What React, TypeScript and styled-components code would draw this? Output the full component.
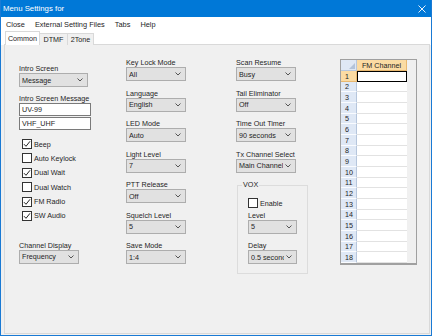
import React from 'react';
import styled, { createGlobalStyle } from 'styled-components';

const Global = createGlobalStyle`
  html, body { margin: 0; padding: 0; background: #f0f0f0; }
  body { font-family: "Liberation Sans", Arial, sans-serif; font-size: 7.2px; color: #1e1e1e; }
  * { box-sizing: border-box; }
`;

const Window = styled.div`
  width: 432px;
  height: 336px;
  display: flex;
  flex-direction: column;
  border: 1px solid #1a7ad4;
  border-top: none;
  background: #f0f0f0;
  overflow: hidden;
`;

const TitleBar = styled.div`
  height: 17px;
  flex: none;
  margin: 0 -1px;
  padding: 0 6px 0 3px;
  background: #0078d7;
  color: #fff;
  font-size: 7.8px;
  display: flex;
  align-items: center;
  justify-content: space-between;
`;

const MenuBar = styled.div`
  height: 14px;
  flex: none;
  background: #fff;
  display: flex;
  align-items: center;
  gap: 10px;
  padding-left: 5px;
  font-size: 7.4px;
`;

const MenuItem = styled.span`
  white-space: nowrap;
`;

const TabStrip = styled.div`
  height: 14px;
  flex: none;
  display: flex;
  align-items: flex-end;
  padding-left: 4px;
  background: #fff;
`;

const Tab = styled.div<{ $active?: boolean; $w: number }>`
  width: ${p => p.$w}px;
  height: ${p => (p.$active ? 14 : 12)}px;
  margin-left: -1px;
  background: ${p => (p.$active ? '#fff' : '#f0f0f0')};
  border: 1px solid #d9d9d9;
  border-bottom: none;
  display: flex;
  align-items: center;
  justify-content: center;
  white-space: nowrap;
  position: relative;
  z-index: ${p => (p.$active ? 1 : 0)};
  &:first-child { margin-left: 0; }
`;

const Panel = styled.div`
  flex: 1;
  margin: -1px 1px 1px 3px;
  border: 1px solid #d9d9d9;
  background: #f0f0f0;
  display: grid;
  grid-template-columns: 107px 110px 104px 77px;
  align-items: start;
  padding-left: 14px;
`;

const Column = styled.div<{ $pt: number; $gap?: number }>`
  display: flex;
  flex-direction: column;
  padding-top: ${p => p.$pt}px;
  gap: ${p => p.$gap ?? 0}px;
`;

const Field = styled.div<{ $mt?: number }>`
  display: flex;
  flex-direction: column;
  margin-top: ${p => p.$mt ?? 0}px;
`;

const Label = styled.div`
  height: 8px;
  line-height: 8px;
  white-space: nowrap;
`;

const SelectBox = styled.div<{ $w: number }>`
  width: ${p => p.$w}px;
  height: 14px;
  background: #e1e1e1;
  border: 1px solid #adadad;
  display: flex;
  align-items: center;
  padding: 0 4px 0 2px;
  gap: 2px;
`;

const SelectText = styled.span`
  flex: 1;
  overflow: hidden;
  white-space: nowrap;
`;

const TextBox = styled.div`
  width: 72px;
  height: 13px;
  background: #fff;
  border: 1px solid #7a7a7a;
  display: flex;
  align-items: center;
  padding-left: 2px;
`;

const TextStack = styled.div`
  display: flex;
  flex-direction: column;
  gap: 1px;
`;

const CheckList = styled.div<{ $mt: number }>`
  display: flex;
  flex-direction: column;
  gap: 4.4px;
  margin-top: ${p => p.$mt}px;
  padding-left: 3px;
`;

const CheckRow = styled.div`
  height: 10px;
  display: flex;
  align-items: center;
  gap: 2px;
  white-space: nowrap;
`;

const Box = styled.span`
  width: 10px;
  height: 10px;
  flex: none;
  background: #fff;
  border: 1px solid #333;
  display: flex;
  align-items: center;
  justify-content: center;
`;

const Group = styled.fieldset`
  margin: 0 0 0 1px;
  width: 71px;
  height: 93px;
  border: 1px solid #dcdcdc;
  padding: 0;
  min-width: 0;
`;

const Legend = styled.legend`
  margin-left: 4px;
  padding: 0 1px;
  line-height: 8px;
  height: 8px;
`;

const GroupBody = styled.div`
  display: flex;
  flex-direction: column;
  padding: 9px 0 0 10px;
`;

const Grid = styled.div`
  width: 77px;
  height: 206px;
  border: 1px solid #a0a0a0;
  border-bottom-width: 2px;
  background: #f0f0f0;
  display: flex;
  flex-direction: column;
`;

const GridRow = styled.div<{ $h: number }>`
  display: flex;
  height: ${p => p.$h}px;
  flex: none;
`;

const Corner = styled.div`
  width: 16px;
  height: 100%;
  background: #dfe8f5;
  border-right: 1px solid #b6c6dc;
  border-bottom: 1px solid #b6c6dc;
  display: flex;
  align-items: flex-end;
  justify-content: flex-end;
  padding: 0 1px 1px 0;
`;

const ColHead = styled.div`
  width: 50px;
  height: 100%;
  background: #fbdba3;
  border-right: 1px solid #e8b870;
  border-bottom: 1px solid #e8b870;
  display: flex;
  align-items: center;
  justify-content: center;
  white-space: nowrap;
`;

const RowHead = styled.div<{ $sel?: boolean }>`
  width: 16px;
  height: 100%;
  background: ${p => (p.$sel ? '#fbdba3' : '#dfe8f5')};
  border-right: 1px solid ${p => (p.$sel ? '#e8b870' : '#b6c6dc')};
  border-bottom: 1px solid ${p => (p.$sel ? '#e8b870' : '#fafcff')};
  display: flex;
  align-items: center;
  padding-left: 4px;
`;

const Cell = styled.div<{ $sel?: boolean }>`
  width: 50px;
  height: 100%;
  background: #fff;
  border-bottom: 1px solid #e2e2e2;
  ${p => (p.$sel ? 'outline: 1px solid #000; outline-offset: -1px; border-bottom-color: #000;' : '')}
`;

const Chevron = () => (
  <svg width="6" height="4" viewBox="0 0 6 4">
    <polyline points="0.5,0.5 3,3 5.5,0.5" fill="none" stroke="#444" strokeWidth="0.9" />
  </svg>
);

const Check = () => (
  <svg width="8" height="8" viewBox="0 0 8 8">
    <polyline points="1,4.2 3,6.3 7,1.3" fill="none" stroke="#222" strokeWidth="1" />
  </svg>
);

const CloseX = () => (
  <svg width="8" height="8" viewBox="0 0 8 8">
    <path d="M0.5 0.5 L7.5 7.5 M7.5 0.5 L0.5 7.5" stroke="#fff" strokeWidth="0.9" />
  </svg>
);

const Select = ({ value, w }: { value: string; w: number }) => (
  <SelectBox $w={w}>
    <SelectText>{value}</SelectText>
    <Chevron />
  </SelectBox>
);

const Checkbox = ({ label, checked }: { label: string; checked?: boolean }) => (
  <CheckRow>
    <Box>{checked && <Check />}</Box>
    <span>{label}</span>
  </CheckRow>
);

const middle: [string, string][] = [
  ['Key Lock Mode', 'All'],
  ['Language', 'English'],
  ['LED Mode', 'Auto'],
  ['Light Level', '7'],
  ['PTT Release', 'Off'],
  ['Squelch Level', '5'],
  ['Save Mode', '1:4'],
];

const right: [string, string][] = [
  ['Scan Resume', 'Busy'],
  ['Tail Eliminator', 'Off'],
  ['Time Out Timer', '90 seconds'],
  ['Tx Channel Select', 'Main Channel'],
];

const rowHeights = Array.from({ length: 18 }, (_, i) => Math.round(((i + 1) * 192) / 18) - Math.round((i * 192) / 18));

export default function App() {
  return (
    <>
      <Global />
      <Window>
        <TitleBar>
          <span>Menu Settings for</span>
          <CloseX />
        </TitleBar>
        <MenuBar>
          <MenuItem>Close</MenuItem>
          <MenuItem>External Setting Files</MenuItem>
          <MenuItem>Tabs</MenuItem>
          <MenuItem>Help</MenuItem>
        </MenuBar>
        <TabStrip>
          <Tab $active $w={35}>Common</Tab>
          <Tab $w={29}>DTMF</Tab>
          <Tab $w={27}>2Tone</Tab>
        </TabStrip>
        <Panel>
          <Column $pt={20}>
            <Field>
              <Label>Intro Screen</Label>
              <Select value="Message" w={69} />
            </Field>
            <Field $mt={8}>
              <Label>Intro Screen Message</Label>
              <TextStack>
                <TextBox>UV-99</TextBox>
                <TextBox>VHF_UHF</TextBox>
              </TextStack>
            </Field>
            <CheckList $mt={9}>
              <Checkbox label="Beep" checked />
              <Checkbox label="Auto Keylock" />
              <Checkbox label="Dual Wait" checked />
              <Checkbox label="Dual Watch" />
              <Checkbox label="FM Radio" checked />
              <Checkbox label="SW Audio" checked />
            </CheckList>
            <Field $mt={21}>
              <Label>Channel Display</Label>
              <Select value="Frequency" w={60} />
            </Field>
          </Column>
          <Column $pt={14} $gap={8.5}>
            {middle.map(([l, v]) => (
              <Field key={l}>
                <Label>{l}</Label>
                <Select value={v} w={60} />
              </Field>
            ))}
          </Column>
          <Column $pt={14} $gap={8.5}>
            {right.map(([l, v]) => (
              <Field key={l}>
                <Label>{l}</Label>
                <Select value={v} w={60} />
              </Field>
            ))}
            <Group>
              <Legend>VOX</Legend>
              <GroupBody>
                <Checkbox label="Enable" />
                <Field $mt={3.5}>
                  <Label>Level</Label>
                  <Select value="5" w={49} />
                </Field>
                <Field $mt={8.5}>
                  <Label>Delay</Label>
                  <Select value="0.5 seconds" w={49} />
                </Field>
              </GroupBody>
            </Group>
          </Column>
          <Column $pt={14}>
            <Grid>
              <GridRow $h={11}>
                <Corner>
                  <svg width="6" height="6" viewBox="0 0 6 6">
                    <polygon points="6,0 6,6 0,6" fill="#b3c3da" />
                  </svg>
                </Corner>
                <ColHead>FM Channel</ColHead>
              </GridRow>
              {rowHeights.map((h, i) => (
                <GridRow key={i} $h={h}>
                  <RowHead $sel={i === 0}>{i + 1}</RowHead>
                  <Cell $sel={i === 0} />
                </GridRow>
              ))}
            </Grid>
          </Column>
        </Panel>
      </Window>
    </>
  );
}
